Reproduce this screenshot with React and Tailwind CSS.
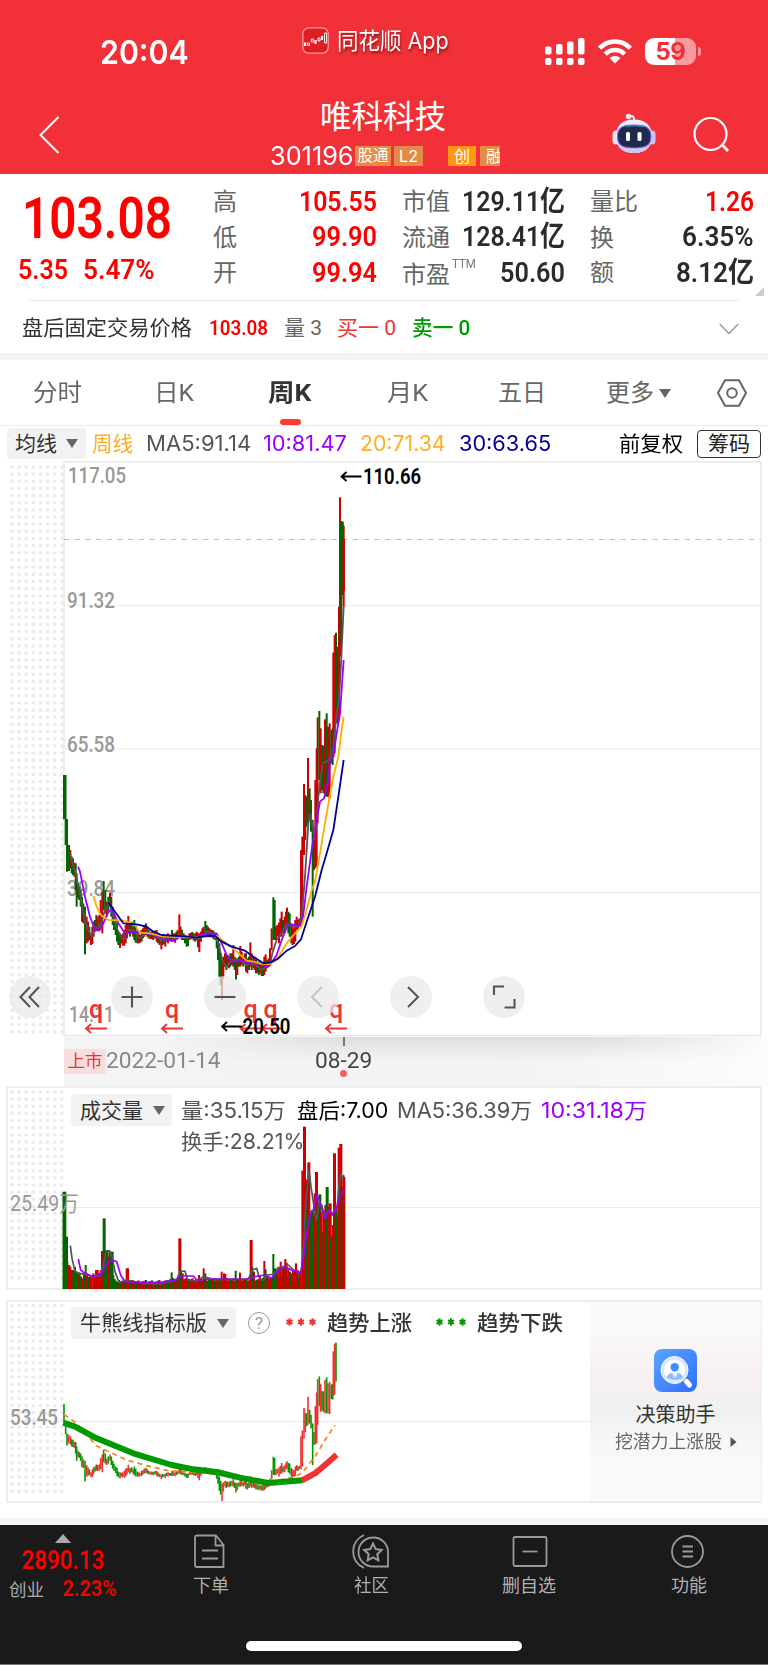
import React, { useLayoutEffect, useRef, useState } from 'react';

// [x, high, low, r/g] in thirds of a pixel, origin at (40, 740)
const RAW = `72 105 238 g,77 240 315 g,81 310 395 g,86 318 380 r,91 330 385 r,95 350 400 g,99 355 405 g,103 368 410 r,107 370 450 g,110 400 500 g,114 430 475 r,118 440 480 g,122 450 500 g,126 470 545 g,130 490 550 r,135 500 643 g,140 530 610 r,144 545 605 r,148 560 600 g,153 580 615 r,157 560 612 r,161 545 590 r,165 540 575 g,169 525 570 r,173 530 570 g,178 525 570 r,182 480 560 r,187 455 580 r,191 423 510 g,196 450 520 g,200 485 530 r,205 470 520 g,210 458 500 r,214 470 530 g,218 500 555 g,222 520 570 g,227 540 585 g,231 550 605 g,235 575 615 g,240 580 624 r,244 585 610 g,248 580 617 r,253 570 617 r,257 555 610 r,261 550 595 r,265 528 580 r,270 550 590 g,275 545 580 g,279 560 590 r,283 540 600 g,287 555 608 g,292 575 610 g,296 580 610 r,300 585 608 r,305 570 605 g,309 565 595 r,313 555 590 r,318 550 585 g,322 560 590 r,326 570 595 g,331 575 597 r,336 575 597 g,340 578 600 r,345 572 595 g,350 570 605 r,354 580 610 g,359 590 615 r,364 595 628 r,368 592 615 g,372 595 612 r,376 590 620 r,380 585 605 g,384 580 610 r,388 585 602 r,392 585 605 g,396 570 605 g,400 580 605 r,405 580 608 r,409 575 600 g,413 570 595 r,418 523 590 r,422 560 595 r,426 570 600 g,431 580 600 r,435 585 610 g,440 590 620 g,444 590 618 g,448 580 600 r,453 578 598 r,457 576 596 g,461 580 602 r,466 580 605 g,470 575 600 r,474 580 622 r,478 580 636 r,483 575 605 r,487 565 590 r,491 560 590 r,496 543 580 g,500 555 585 g,504 560 590 r,509 565 585 r,513 570 590 g,518 570 595 r,522 575 598 g,526 580 600 g,530 590 625 g,534 600 660 g,538 610 710 g,542 640 735 g,546 660 780 r,550 650 715 r,555 640 680 r,559 645 690 g,563 645 680 r,567 650 685 r,571 640 680 g,576 640 675 r,580 615 680 r,584 650 690 g,588 655 720 g,592 655 705 r,597 650 680 g,601 618 680 r,605 635 675 r,610 650 680 g,614 640 670 r,618 640 695 g,622 655 700 r,627 650 690 g,631 607 680 r,635 640 690 r,640 650 685 g,644 655 690 r,648 660 700 g,652 665 700 r,657 665 705 g,661 675 700 r,665 670 708 r,669 670 708 g,673 650 705 r,677 643 695 r,682 660 685 g,686 655 680 r,690 625 665 r,695 565 630 r,700 472 600 g,704 480 600 g,708 560 600 r,712 555 590 r,717 548 610 r,721 535 590 r,725 515 590 r,729 540 580 g,734 530 580 r,738 515 560 r,741 503 555 r,745 515 580 g,749 520 590 g,754 550 610 g,758 560 615 r,762 565 612 r,766 540 605 r,770 530 570 r,774 540 570 g,778 535 560 r,783 330 560 r,787 290 540 r,792 132 345 r,796 165 300 r,800 170 260 g,804 54 250 r,809 145 240 g,813 180 275 g,818 240 530 g,822 300 390 g,826 120 385 r,830 25 380 r,833 -68 250 r,838 -87 120 g,842 -35 160 r,846 15 150 g,850 17 160 g,855 -62 170 r,860 -80 170 g,864 -40 170 r,869 -50 175 r,874 -30 70 g,878 -35 75 g,880 -262 50 r,884 -315 40 r,888 -322 -50 g,892 -280 -50 g,897 -400 -58 r,900 -728 -250 r,904 -657 -290 g,908 -655 -435 g,911 -643 -400 r`;

const CANDLES = RAW.split(',').map((row) => {
  const [x, hi, lo, c] = row.split(' ');
  return { x: 40 + x / 3, hi: 740 + hi / 3, lo: 740 + lo / 3, up: c === 'r' };
});

const MA = [
  ['#555555', '90,340 105,395 118,450 130,520 140,560 155,590 165,565 180,560 192,520 207,485 215,510 228,560 245,595 255,595 265,570 280,570 300,595 320,575 340,585 365,600 400,598 420,585 450,592 480,595 500,575 520,580 535,610 548,665 560,680 575,660 600,660 620,675 640,670 665,690 690,675 697,640 710,600 730,570 742,550 755,560 775,560 785,530 795,410 805,250 811,222 820,270 828,270 835,170 848,70 860,65 870,55 880,20 890,-80 897,-120 903,-230 911,-400'],
  ['#9900ff', '114,380 120,395 135,470 150,530 165,570 178,572 190,550 207,512 218,512 235,550 255,580 290,575 330,582 360,590 380,600 405,600 420,590 460,592 500,582 530,580 545,610 560,645 575,665 605,662 630,668 660,672 680,680 690,675 710,645 725,600 745,552 775,558 788,540 800,440 815,330 825,270 840,185 852,175 865,120 870,60 880,50 890,-20 900,-80 911,-240'],
  ['#ffae00', '160,468 170,500 182,525 205,540 245,541 270,548 285,555 300,578 330,580 370,590 440,592 490,590 530,588 560,610 590,635 620,662 640,665 665,672 690,672 710,660 740,610 765,580 785,558 800,510 815,450 825,425 840,340 860,220 880,110 895,50 905,-30 911,-70'],
  ['#000099', '205,487 225,515 250,550 290,553 320,560 340,575 365,585 440,590 470,592 500,588 525,588 545,605 575,620 615,632 640,650 670,670 690,668 715,655 740,632 765,618 783,598 800,545 825,470 845,390 860,340 880,270 895,170 911,60'],
];

// Volume bars that stand out; everything between them is low background volume
const SPIKES = `193 335 g,198 470 g,202 545 g,207 555 r,211 560 r,216 570 r,220 570 g,225 560 g,230 575 g,234 580 r,239 580 g,243 590 g,248 595 r,252 580 g,257 555 g,261 580 r,266 590 g,270 590 r,275 590 r,280 580 r,284 585 r,288 570 r,293 570 r,297 580 r,302 570 r,306 513 r,311 415 g,316 510 g,320 512 g,325 530 r,330 515 g,335 515 g,340 585 g,344 597 g,348 602 g,352 606 g,380 565 r,384 565 r,515 577 g,538 475 r,543 570 g,548 580 r,597 585 r,611 565 r,616 580 g,665 575 r,672 580 r,676 582 r,707 572 g,720 578 r,752 480 r,757 560 g,762 575 r,793 543 r,797 568 g,820 522 g,825 565 g,829 570 g,833 562 r,838 560 r,842 545 r,847 565 r,852 560 g,856 537 r,860 548 r,865 568 r,870 575 g,875 580 g,879 572 r,884 570 r,888 550 r,893 570 r,898 580 g,902 575 r,907 272 r,912 140 r,917 298 r,921 310 g,925 247 r,930 400 g,935 390 g,939 400 g,944 340 r,948 276 r,953 370 g,958 343 g,962 395 r,967 455 g,971 395 r,976 375 r,980 321 g,984 380 r,989 370 r,993 470 g,998 435 r,1002 220 r,1007 380 g,1011 405 g,1016 203 r,1021 192 r,1025 320 g,1030 290 r`
  .split(',')
  .map((s) => s.split(' '));

const QUIET = [];
for (let x = 357, i = 0; x < 904; x += 4.5, i++) {
  const top = x < 500 ? 604 : x < 780 ? 598 : 592;
  QUIET.push([x, top + ((i * 7) % 9) - 4, (i * 5) % 7 < 4 ? 'r' : 'g']);
}
const VOLUMES = [...QUIET, ...SPIKES];

const VOL_MA = [
  ['#555555', '211,497 216,535 225,575 240,580 260,585 285,590 300,588 310,555 318,515 328,512 336,530 345,575 357,607 380,600 430,610 480,612 530,600 540,575 555,573 562,598 590,603 610,590 640,598 680,598 745,597 757,570 770,565 780,600 792,600 800,585 820,583 835,565 850,560 865,555 880,570 903,580 912,480 918,360 927,270 933,320 945,400 950,420 957,370 965,375 973,405 985,395 1000,400 1012,375 1017,320 1022,280 1027,295 1032,285'],
  ['#9900ff', '235,537 242,570 255,580 280,590 305,580 320,550 335,540 350,545 362,585 375,605 430,607 480,608 530,598 545,588 580,588 590,600 640,597 690,598 745,597 765,590 795,585 815,595 830,575 855,560 870,568 903,578 912,520 922,450 932,400 940,390 950,345 955,355 965,385 975,415 987,390 997,405 1010,385 1020,345 1032,330'],
];

const SANS = "font-['Inter','Noto_Sans_CJK_SC',sans-serif]";
const DIN = "font-['Roboto','Noto_Sans_CJK_SC',sans-serif]";

// Text squeezed or stretched to an exact width
const Fit = ({ w, className = '', children }) => {
  const ref = useRef(null);
  const [scale, setScale] = useState(1);

  useLayoutEffect(() => {
    setScale(w / ref.current.offsetWidth);
  }, [w, children]);

  return (
    <span className={`inline-block shrink-0 whitespace-nowrap ${className}`} style={{ width: w }}>
      <span ref={ref} className="inline-block origin-left" style={{ transform: `scaleX(${scale})` }}>
        {children}
      </span>
    </span>
  );
};

const Label = ({ x, y, w, size = 22, fill = '#999999', weight = 500, children }) => (
  <text
    x={x}
    y={y}
    textLength={w}
    lengthAdjust="spacingAndGlyphs"
    fontSize={size}
    fontWeight={weight}
    fill={fill}
    className={DIN}
  >
    {children}
  </text>
);

const Dots = ({ id, x, y, w, h }) => (
  <>
    <pattern id={id} x={x} y={y} width="7.12" height="7.15" patternUnits="userSpaceOnUse">
      <circle cx="2" cy="2" r="1.7" fill="#e9e9e9" />
    </pattern>
    <rect x={x} y={y} width={w} height={h} fill={`url(#${id})`} />
  </>
);

const Arrow = ({ x, y, w = 21, color }) => (
  <path d={`M${x + w} ${y}H${x}m5 -4.5L${x} ${y}l5 4.5`} fill="none" stroke={color} strokeWidth="1.8" />
);

const Caret = ({ className }) => (
  <svg viewBox="0 0 12 9" className={className}>
    <path d="M0 0h12L6 9z" fill="currentColor" />
  </svg>
);

const StatusBar = () => (
  <div className={`flex h-[86px] items-start text-white ${SANS}`}>
    <Fit w={89} className="ml-[100px] mt-[33px] text-[32px] font-semibold leading-[40px]">20:04</Fit>
    <svg viewBox="0 0 27 27" className="ml-[113px] mt-[27px] h-[27px] w-[27px]">
      <rect x="0.8" y="0.8" width="25.4" height="25.4" rx="6" fill="#e01c24" stroke="#f79a9d" strokeWidth="1.3" />
      <path d="M3 15.500v3.500M13.500 13v4M20 9v4" stroke="#fff" strokeWidth="2.200" />
      <path d="M5.500 16v2.500h2V16zM9.300 12v3h2v-3zM16 11v3h2v-3zM22.500 6v10h2V6z" fill="none" stroke="#fff" strokeWidth=".9" />
    </svg>
    <Fit w={112} className="ml-[8px] mt-[26px] text-[23px] leading-[30px] [text-shadow:1px_2px_3px_rgba(90,0,0,0.7)]">同花顺 App</Fit>
    <svg viewBox="0 0 40 28" className="ml-[96px] mt-[38px] h-[28px] w-[40px]" fill="#fff">
      <rect x="0" y="8.500" width="6.500" height="8" rx="2" />
      <rect x="11" y="6" width="6.500" height="10.500" rx="2" />
      <rect x="22" y="3.500" width="6.500" height="13" rx="2" />
      <rect x="33" y="0" width="6.500" height="16.500" rx="2" />
      <rect x="0" y="20" width="6.500" height="7" rx="2" />
      <rect x="11" y="20" width="6.500" height="7" rx="2" />
      <rect x="22" y="20" width="6.500" height="7" rx="2" />
      <rect x="33" y="20" width="6.500" height="7" rx="2" />
    </svg>
    <svg viewBox="0 0 34 25" className="ml-[13px] mt-[39px] h-[25px] w-[34px]" fill="none" stroke="#fff" strokeWidth="4.600">
      <path d="M1.600 9.200C10 .2 24 .2 32.400 9.200" />
      <path d="M7.300 15.200C12.500 9.600 21.500 9.600 26.700 15.200" />
      <path d="M17 24.500l-5.500-5.500c3-2.700 8-2.700 11 0z" fill="#fff" stroke="none" />
    </svg>
    <div className="ml-[13px] mt-[38px] flex items-center">
      <div className="flex h-[27px] w-[51px] items-center justify-center rounded-[9px] bg-[linear-gradient(90deg,#fff_59%,#f89a9e_59%)] text-[24px] font-bold leading-none tracking-[-0.5px] text-[#f23038]">
        59
      </div>
      <div className="ml-[2px] h-[9px] w-[3px] rounded-r-full bg-[#f89a9e]" />
    </div>
  </div>
);

const Robot = () => (
  <svg viewBox="0 0 44 42" className="h-[42px] w-[44px]">
    <path d="M22 8V5.500c0-1.500-1-2.500-3-2.500h-2" fill="none" stroke="#f0effb" strokeWidth="1.800" />
    <circle cx="16.500" cy="3.500" r="2.700" fill="#ececfb" />
    <rect x="0.500" y="17.500" width="7" height="14" rx="3.500" fill="#e4e3f8" />
    <rect x="36.500" y="17.500" width="7" height="14" rx="3.500" fill="#c9c4f2" />
    <path d="M22 6.500c11 0 18 6 18 16.500S34 40 22 40 4 34 4 23 11 6.500 22 6.500z" fill="#eeedfb" />
    <path d="M6 31c6 7 26 7 32 0-2.500 6.500-8.500 9-16 9S8.500 37.500 6 31z" fill="#c8c9ee" />
    <path d="M22 12c11 0 17 2 17 11.500S33 35 22 35 5.500 33 5.500 23.500 11 12 22 12z" fill="#1f2a4d" stroke="#7b62e0" strokeWidth="1.200" />
    <path d="M14 14c5-1.500 13-1.500 18 0" fill="none" stroke="#37d0d8" strokeWidth="1" opacity=".6" />
    <rect x="14" y="19" width="4" height="9" rx="1.500" fill="#fff" />
    <rect x="25.500" y="19" width="4" height="9" rx="1.500" fill="#fff" />
  </svg>
);

const TitleBar = () => (
  <div className="flex h-[88px] items-start text-white">
    <svg viewBox="0 0 22 38" className="ml-[38px] mt-[30px] h-[38px] w-[22px]" fill="none" stroke="#fff" strokeWidth="2">
      <path d="M20.500 1L2.500 19l18 18" />
    </svg>
    <div className="ml-[210px] w-[230px]">
      <div className={`mt-[11px] flex h-[42px] items-center pl-[50px] text-[31.500px] ${DIN}`}>唯科科技</div>
      <div className={`mt-[6px] flex h-[22px] items-center ${SANS}`}>
        <Fit w={84} className="text-[25px] leading-[22px]">301196</Fit>
        <div className="ml-px flex h-[20px] w-[36px] items-center justify-center bg-[#e28c49] text-[15.500px]">股通</div>
        <div className="ml-[3px] flex h-[20px] w-[29px] items-center justify-center bg-[#e28c49] text-[16px]">L2</div>
        <div className="ml-[25px] flex h-[20px] w-[28px] items-center justify-center bg-[#ff9812] text-[16px]">创</div>
        <div className="ml-[4px] flex h-[20px] w-[20px] items-center overflow-hidden bg-[#e28c49] pl-[6px] text-[16px]">融</div>
      </div>
    </div>
    <div className="ml-[112px] mt-[27px]"><Robot /></div>
    <svg viewBox="0 0 38 38" className="ml-[37px] mt-[30px] h-[38px] w-[38px]" fill="none" stroke="#fff" strokeWidth="2.200">
      <circle cx="17.500" cy="18" r="16" />
      <path d="M29 28.500l6 6.500" strokeWidth="2.800" />
    </svg>
  </div>
);

const RED = 'text-[#ff0000]';
const DARK = 'text-[#2b2b2b]';

const STATS = [
  { box: 'w-[164px]', rows: [['高', 24, '105.55', 78, RED], ['低', 24, '99.90', 65, RED], ['开', 24, '99.94', 65, RED]] },
  { box: 'w-[163px] ml-[25px]', rows: [['市值', 48, '129.11亿', 103, DARK], ['流通', 48, '128.41亿', 103, DARK], ['市盈', 48, '50.60', 65, DARK, 'TTM']] },
  { box: 'w-[164px] ml-[25px]', rows: [['量比', 48, '1.26', 49, RED], ['换', 24, '6.35%', 72, DARK], ['额', 24, '8.12亿', 78, DARK]] },
];

const Quote = () => (
  <div className={`relative flex h-[126px] shrink-0 ${DIN}`}>
    <div className="w-[213px] pt-[18px]">
      <Fit w={150} className="ml-[22px] text-[57px] font-semibold leading-[53px] text-[#ff0000]">103.08</Fit>
      <div className="flex pl-[18px] pt-[10px] text-[28px] font-semibold leading-[30px] text-[#ff0000]">
        <Fit w={50}>5.35</Fit>
        <Fit w={72} className="ml-[15px]">5.47%</Fit>
      </div>
    </div>
    {STATS.map((col) => (
      <div key={col.box} className={`pt-[10px] ${col.box}`}>
        {col.rows.map(([name, nw, value, vw, color, sup]) => (
          <div key={name} className="flex h-[35.500px] items-center">
            <Fit w={nw} className={sup ? 'pt-[4px] text-[24px] leading-none text-[#666]' : 'pt-[1px] text-[24px] leading-none text-[#666]'}>{name}</Fit>
            {sup && <Fit w={24} className="-mt-[18px] ml-[2px] text-[12px] leading-none text-[#777]">{sup}</Fit>}
            <Fit w={vw} className={`ml-auto text-[28px] font-semibold leading-none ${color}`}>{value}</Fit>
          </div>
        ))}
      </div>
    ))}
    <svg viewBox="0 0 9 9" className="absolute bottom-[4px] right-[4px] h-[9px] w-[9px]">
      <path d="M9 0v9H0z" fill="#cccccc" />
    </svg>
  </div>
);

const AfterHours = () => (
  <>
    <div className="ml-[29px] mr-[29px] h-px shrink-0 bg-[#e9e9e9]" />
    <div className={`flex h-[52px] shrink-0 items-center pt-[4px] text-[21px] ${DIN}`}>
      <Fit w={170} className="ml-[22px] text-[#333]">盘后固定交易价格</Fit>
      <Fit w={59} className="ml-[17px] font-semibold text-[#ff0000]">103.08</Fit>
      <Fit w={38} className="ml-[16px] text-[#666]">量 3</Fit>
      <Fit w={59} className="ml-[15px] text-[#ee3333]">买一 0</Fit>
      <Fit w={58} className="ml-[16px] font-medium text-[#009900]">卖一 0</Fit>
      <svg viewBox="0 0 20 12" className="ml-[249px] h-[12px] w-[20px]" fill="none" stroke="#999" strokeWidth="1.500">
        <path d="M.7 1L10 10.500 19.300 1" />
      </svg>
    </div>
    <div className="h-[7px] shrink-0 bg-[#f4f4f4]" />
  </>
);

const Tabs = () => (
  <div className={`relative flex h-[66px] shrink-0 items-center border-b border-[#eaeaea] pt-[1px] text-[24px] text-[#666] ${DIN}`}>
    <Fit w={49} className="ml-[33px]">分时</Fit>
    <Fit w={40} className="ml-[72px]">日K</Fit>
    <Fit w={43} className="ml-[74px] font-bold text-[#333]">周K</Fit>
    <Fit w={41} className="ml-[76px]">月K</Fit>
    <Fit w={48} className="ml-[70px]">五日</Fit>
    <Fit w={48} className="ml-[60px]">更多</Fit>
    <Caret className="ml-[5px] h-[9px] w-[12px]" />
    <svg viewBox="0 0 30 28" className="ml-[46px] h-[28px] w-[30px]" fill="none" stroke="#666" strokeWidth="2">
      <path d="M8 1.200h14L29 14l-7 12.800H8L1 14z" strokeLinejoin="round" />
      <circle cx="15" cy="14" r="4.800" />
    </svg>
    <div className="absolute bottom-0 left-[280px] h-[6px] w-[21px] rounded-[3px] bg-[#ff3a30]" />
  </div>
);

const MaRow = () => (
  <div className={`flex h-[35px] shrink-0 items-center text-[21px] ${SANS}`}>
    <div className="ml-[7px] flex h-[31px] w-[79px] items-center rounded bg-[#f2f2f2] pl-[8px] text-[#333]">
      <Fit w={42}>均线</Fit>
      <Caret className="ml-[9px] h-[9px] w-[12px] text-[#666]" />
    </div>
    <Fit w={41} className="ml-[6px] text-[#ffae22]">周线</Fit>
    <Fit w={105} className="ml-[13px] text-[#555]">MA5:91.14</Fit>
    <Fit w={84} className="ml-[12px] text-[#9900ff]">10:81.47</Fit>
    <Fit w={86} className="ml-[13px] text-[#ffae22]">20:71.34</Fit>
    <Fit w={92} className="ml-[13px] text-[#000099]">30:63.65</Fit>
    <Fit w={64} className="ml-[68px] text-black">前复权</Fit>
    <div className="ml-[14px] flex h-[28px] w-[64px] items-center justify-center rounded-[4px] border border-[#333] text-[#222]">筹码</div>
  </div>
);

const points = (str, ox, oy) =>
  str.split(' ').map((p) => {
    const [x, y] = p.split(',');
    return `${ox + x / 3},${oy + y / 3}`;
  }).join(' ');

const ROUND = 'flex h-[42px] w-[42px] items-center justify-center rounded-full bg-[#e9e9e9]/75';
const TOOLS = [
  ['left', 'M15 5L5.500 15 15 25M24 5l-9.500 10L24 25', '#555'],
  ['zoomIn', 'M4.500 15h21M15 4.500v21', '#555'],
  ['zoomOut', 'M4.500 15h21', '#555'],
  ['prev', 'M19 5L9 15l10 10', '#c4c4c4'],
  ['next', 'M12 5l10 10-10 10', '#555'],
  ['expand', 'M5 13V4.500h10M25.500 17v8.500h-10', '#555'],
];

const PriceChart = () => (
  <div className="relative h-[576px] shrink-0">
    <svg viewBox="0 461 768 576" className="block h-[576px] w-[768px]">
      <Dots id="dots-a" x={10} y={465} w={54} h={570} />
      <path d="M64 605.500h697M64 749h697M64 892.500h697" stroke="#ebebeb" strokeWidth="1.200" />
      <rect x="64" y="461.800" width="697" height="573.700" fill="none" stroke="#e8e8e8" strokeWidth="1.500" />
      <path d="M64 539.500h697" stroke="#deb887" strokeWidth="1.200" strokeDasharray="5.400 5.300" />
      <Label x={68} y={483} w={58}>117.05</Label>
      <Label x={67} y={608} w={48}>91.32</Label>
      <Label x={67} y={752} w={48}>65.58</Label>
      <Label x={67} y={896} w={48}>39.84</Label>
      <Label x={69} y={1022} w={45}>14.11</Label>
      {CANDLES.map((c, i) => (
        <rect key={i} x={c.x - 1} y={c.hi} width="2" height={c.lo - c.hi} fill={c.up ? '#cc0000' : '#006600'} />
      ))}
      <rect x="63" y="775" width="3.500" height="44" fill="#006600" />
      <rect x="65" y="819" width="3" height="26" fill="#006600" />
      <rect x="67" y="845" width="3" height="26" fill="#006600" />
      <rect x="340" y="522" width="3.500" height="65" fill="#006600" />
      <rect x="342.500" y="539" width="2.500" height="52" fill="#cc0000" />
      {MA.map(([color, pts]) => (
        <polyline key={color} points={points(pts, 40, 740)} fill="none" stroke={color} strokeWidth="1.800" strokeLinejoin="round" />
      ))}
      <Arrow x={341.500} y={476.500} w={20} color="#000" />
      <Label x={363} y={484} w={58} fill="#000" weight={600}>110.66</Label>
      {[96, 172, 250.500, 270.500, 336].map((x) => (
        <text key={x} x={x} y="1018" textAnchor="middle" fontSize="25" fontWeight="500" fill="#ee3333" className={DIN}>q</text>
      ))}
      {[86, 162, 240.500, 262, 326].map((x) => (
        <Arrow key={x} x={x} y={1028.500} color="#ee3333" />
      ))}
      <Arrow x={222} y={1026.500} w={20} color="#000" />
      <Label x={242.500} y={1034} w={48} fill="#000" weight={600}>20.50</Label>
    </svg>
    <div className="absolute left-[9px] top-[515px] flex">
      {TOOLS.map(([name, d, color], i) => (
        <div key={name} className={i === 0 ? `${ROUND} mr-[60px]` : `${ROUND} mr-[51px]`}>
          <svg viewBox="0 0 30 30" className="h-[30px] w-[30px]" fill="none" stroke={color} strokeWidth="2.100">
            <path d={d} />
          </svg>
        </div>
      ))}
    </div>
  </div>
);

const DateStrip = () => (
  <div className={`relative ml-[64px] flex h-[49px] shrink-0 items-center bg-[linear-gradient(90deg,#f4f4f4_0%,#f3f3f3_65%,#fcfcfc_100%)] text-[21.500px] ${DIN}`}>
    <div className="absolute inset-x-0 top-0 h-[24px] bg-linear-to-b from-[#dedede] to-transparent [mask-image:linear-gradient(90deg,transparent_15%,#000_40%,#000_75%,transparent_100%)]" />
    <div className="relative flex h-[25px] w-[42px] items-center justify-center bg-[#f7dfdf] text-[17.500px] text-[#ee3333]">上市</div>
    <Fit w={115} className="relative text-[#888]">2022-01-14</Fit>
    <Fit w={57} className="relative ml-[94px] text-[#444]">08-29</Fit>
    <div className="absolute left-[279px] top-0 h-[9px] w-[1.500px] bg-[#777]" />
    <div className="absolute bottom-[9px] left-[276px] h-[7px] w-[7px] rounded-full bg-[#f06060]" />
  </div>
);

const Picker = ({ w, box, children }) => (
  <div className={`flex h-[32px] shrink-0 items-center rounded bg-[#f2f2f2] pl-[9px] pt-[1px] text-[21px] text-[#333] ${box}`}>
    <Fit w={w}>{children}</Fit>
    <Caret className="ml-[10px] h-[9px] w-[12px] text-[#666]" />
  </div>
);

const VolumePanel = () => (
  <div className={`relative h-[204px] shrink-0 text-[21px] ${SANS}`}>
    <svg viewBox="0 1086 768 204" className="absolute inset-0 h-[204px] w-[768px]">
      <Dots id="dots-b" x={10} y={1090} w={53.500} h={192} />
      <path d="M7 1207.500h754" stroke="#ebebeb" strokeWidth="1.200" />
      <rect x="7" y="1087" width="754" height="202" fill="none" stroke="#e8e8e8" strokeWidth="1.500" />
      {VOLUMES.map(([x, top, c], i) => (
        <rect key={i} x={x / 3 - 1} y={1080 + top / 3} width={top < 520 ? 3 : 2} height={209 - top / 3} fill={c === 'r' ? '#cc0000' : '#006600'} />
      ))}
      <rect x="62.500" y="1192" width="3.500" height="97" fill="#006600" />
      {VOL_MA.map(([color, pts]) => (
        <polyline key={color} points={points(pts, 0, 1080)} fill="none" stroke={color} strokeWidth="1.700" strokeLinejoin="round" />
      ))}
      <Label x={10} y={1211} w={69} weight={400}>25.49万</Label>
    </svg>
    <div className="relative flex items-start pl-[71px] pt-[8px]">
      <Picker w={63} box="w-[101px]">成交量</Picker>
      <div className="ml-[9px] text-[#555]">
        <div className="flex h-[32px] items-center pt-[2px]">
          <Fit w={105}>量:35.15万</Fit>
          <Fit w={91} className="ml-[11px] text-black">盘后:7.00</Fit>
          <Fit w={135} className="ml-[9px]">MA5:36.39万</Fit>
          <Fit w={106} className="ml-[9px] text-[#9900ff]">10:31.18万</Fit>
        </div>
        <Fit w={123} className="-mt-[5px] block">换手:28.21%</Fit>
      </div>
    </div>
  </div>
);

const TrendPanel = () => (
  <div className={`relative mt-[9px] flex h-[205px] shrink-0 ${DIN}`}>
    <svg viewBox="0 1299 768 205" className="absolute inset-0 h-[205px] w-[768px]">
      <Dots id="dots-c" x={10} y={1303.500} w={53.500} h={192} />
      <path d="M7 1421.500h583" stroke="#ebebeb" strokeWidth="1.200" />
      <rect x="7" y="1301" width="754" height="201" fill="none" stroke="#e8e8e8" strokeWidth="1.500" />
      <Label x={10} y={1425} w={48}>53.45</Label>
      {CANDLES.filter((c) => c.x < 336.500).map((c, i) => (
        <rect key={i} x={c.x - 0.8} y={1404 + (c.hi - 775) * 0.431} width="1.600" height={(c.lo - c.hi) * 0.431} fill={c.up ? '#ee3333' : '#009900'} />
      ))}
      <polyline points={points('192,373 230,400 290,468 380,510 440,527 505,542 600,547 660,555 800,578 850,568 880,562 905,550 945,500 975,450 1005,405', 0, 1290)} fill="none" stroke="#ff7f27" strokeWidth="1.700" strokeDasharray="5 4" />
      <polyline points={points('190,398 225,410 290,445 400,490 515,525 580,538 650,546 720,563 805,579 870,574 908,571', 0, 1290)} fill="none" stroke="#009900" strokeWidth="6" strokeLinejoin="round" />
      <polyline points={points('906,571 945,550 975,525 1010,494', 0, 1290)} fill="none" stroke="#ee3333" strokeWidth="6" strokeLinejoin="round" />
    </svg>
    <div className="relative flex w-[590px] items-start pl-[71px] pt-[8px] text-[21px] text-[#333]">
      <Picker w={127} box="w-[165px]">牛熊线指标版</Picker>
      <div className="ml-[12px] mt-[5px] flex h-[22px] w-[22px] items-center justify-center rounded-full border-[1.500px] border-[#999] text-[17px] leading-none text-[#999]">?</div>
      <Stars className="ml-[16px] text-[#ee3333]" />
      <Fit w={85} className="ml-[11px] pt-[1px] font-medium leading-[31px]">趋势上涨</Fit>
      <Stars className="ml-[24px] text-[#009900]" />
      <Fit w={86} className="ml-[11px] pt-[1px] font-medium leading-[31px]">趋势下跌</Fit>
    </div>
    <div className="relative my-[3px] flex w-[171px] flex-col items-center bg-[#fafafa] bg-[linear-gradient(180deg,#fafafa_10%,#f9f0f0_38%,#eff1f0_54%,#f5f8f7_70%,#fafafa_88%)] pt-[47px]">
      <svg viewBox="0 0 43 43" className="h-[43px] w-[43px]">
        <defs>
          <linearGradient id="blue" x1="0" y1="0" x2="1" y2="1">
            <stop offset="0" stopColor="#5ba6ff" />
            <stop offset="1" stopColor="#2f6dff" />
          </linearGradient>
        </defs>
        <rect width="43" height="43" rx="8" fill="url(#blue)" />
        <circle cx="20.500" cy="21" r="12" fill="#fff" stroke="#d5e6ff" strokeWidth="3" />
        <circle cx="20.500" cy="21" r="13.500" fill="none" stroke="#fff" strokeWidth="1" />
        <circle cx="20.700" cy="18.300" r="4.200" fill="#3f8bff" />
        <path d="M13 28.500c0-3 3-4.500 5.500-4.800L20 29.500l.8-5 .8 5 1.700-5.800c2.500.3 5.500 1.800 5.500 4.800-3 3.300-12.500 3.300-15.800 0z" fill="#8cbcff" />
        <path d="M32.500 32.500l3 3.500" stroke="#fff" strokeWidth="5" strokeLinecap="round" />
      </svg>
      <Fit w={80} className="mt-[10px] text-[20px] leading-[26px] text-[#333]">决策助手</Fit>
      <div className="mt-[1px] flex items-center pl-px">
        <Fit w={107} className="text-[18px] leading-[26px] text-[#666]">挖潜力上涨股</Fit>
        <svg viewBox="0 0 7 12" className="ml-[8px] h-[12px] w-[7px]">
          <path d="M.5 1v10l6-5z" fill="#555" />
        </svg>
      </div>
    </div>
  </div>
);

function Stars({ className }) {
  return (
    <svg viewBox="0 0 30 8" className={`mt-[11px] h-[8px] w-[30px] ${className}`} stroke="currentColor" strokeWidth="2">
      {[3.500, 15, 26.500].map((x) => (
        <path key={x} d={`M${x} 0.300v7.400M${x - 3} 2.200l6 3.600M${x + 3} 2.200l-6 3.600`} />
      ))}
    </svg>
  );
}

const NavItem = ({ box, w, label, children }) => (
  <div className={`flex flex-col items-center pt-[8px] ${box}`}>
    <svg viewBox="0 0 38 36" className="h-[36px] w-[38px]" fill="none" stroke="#9a9a9a" strokeWidth="1.800">
      {children}
    </svg>
    <Fit w={w} className="mt-[4px] text-[18px] leading-[26px] text-[#b0b0b0]">{label}</Fit>
  </div>
);

const BottomNav = () => (
  <div className={`flex h-[140px] shrink-0 flex-col border-b border-[#777] bg-[#1a1a1a] ${DIN}`}>
    <div className="flex h-[116px] items-start">
      <div className="w-[126px] pt-[9px]">
        <svg viewBox="0 0 16 9" className="ml-[55px] block h-[9px] w-[16px]">
          <path d="M8 0l8 9H0z" fill="#aaa" />
        </svg>
        <Fit w={83} className="ml-[22px] mt-[3px] text-[25px] font-semibold leading-[30px] text-[#ff0000]">2890.13</Fit>
        <div className="mt-[-2px] flex items-center">
          <Fit w={35} className="ml-[9px] pt-[2px] text-[17.500px] text-[#aaa]">创业</Fit>
          <Fit w={54} className="ml-[19px] text-[22px] font-semibold leading-[30px] text-[#ff0000]">2.23%</Fit>
        </div>
      </div>
      <NavItem box="ml-[65px] w-[40px]" w={36} label="下单">
        <path d="M5 2.500h19l7.500 9.500v22H5q-2 0-2-2V4.500q0-2 2-2zM23.500 3v9.500H31M10 17.500h16M10 25.500h16" strokeLinejoin="round" />
      </NavItem>
      <NavItem box="ml-[119px] w-[42px]" w={35} label="社区">
        <path d="M21 4.500a14.500 14.500 0 1 0 0 29h15V19A14.500 14.500 0 0 0 21 4.500zM12 2C-2.500 9-2.500 28 12 35" />
        <path d="M21 10.500l2.700 5.600 6 .8-4.400 4.300 1 6.100-5.300-2.900-5.300 2.900 1-6.100-4.400-4.300 6-.8z" strokeWidth="2" />
      </NavItem>
      <NavItem box="ml-[109px] w-[56px]" w={54} label="删自选">
        <rect x="3.500" y="4" width="33" height="29" rx="1.500" />
        <path d="M12.500 18.500h15" />
      </NavItem>
      <NavItem box="ml-[111px] w-[42px]" w={36} label="功能">
        <circle cx="17.500" cy="18.500" r="15.500" />
        <path d="M12.500 13.500H23M12.500 18.500H23M12.500 23.500H23" />
      </NavItem>
    </div>
    <div className="mx-auto h-[10px] w-[276px] rounded-full bg-white" />
  </div>
);

const App = () => {
  return (
    <div className="flex h-[1665px] w-[768px] flex-col overflow-hidden bg-white">
      <div className="h-[174px] shrink-0 bg-[#f23038]">
        <StatusBar />
        <TitleBar />
      </div>
      <Quote />
      <AfterHours />
      <Tabs />
      <MaRow />
      <PriceChart />
      <DateStrip />
      <VolumePanel />
      <TrendPanel />
      <div className="mt-[14px] h-[7px] shrink-0 bg-[#f4f4f4]" />
      <BottomNav />
    </div>
  );
};

export default App;
